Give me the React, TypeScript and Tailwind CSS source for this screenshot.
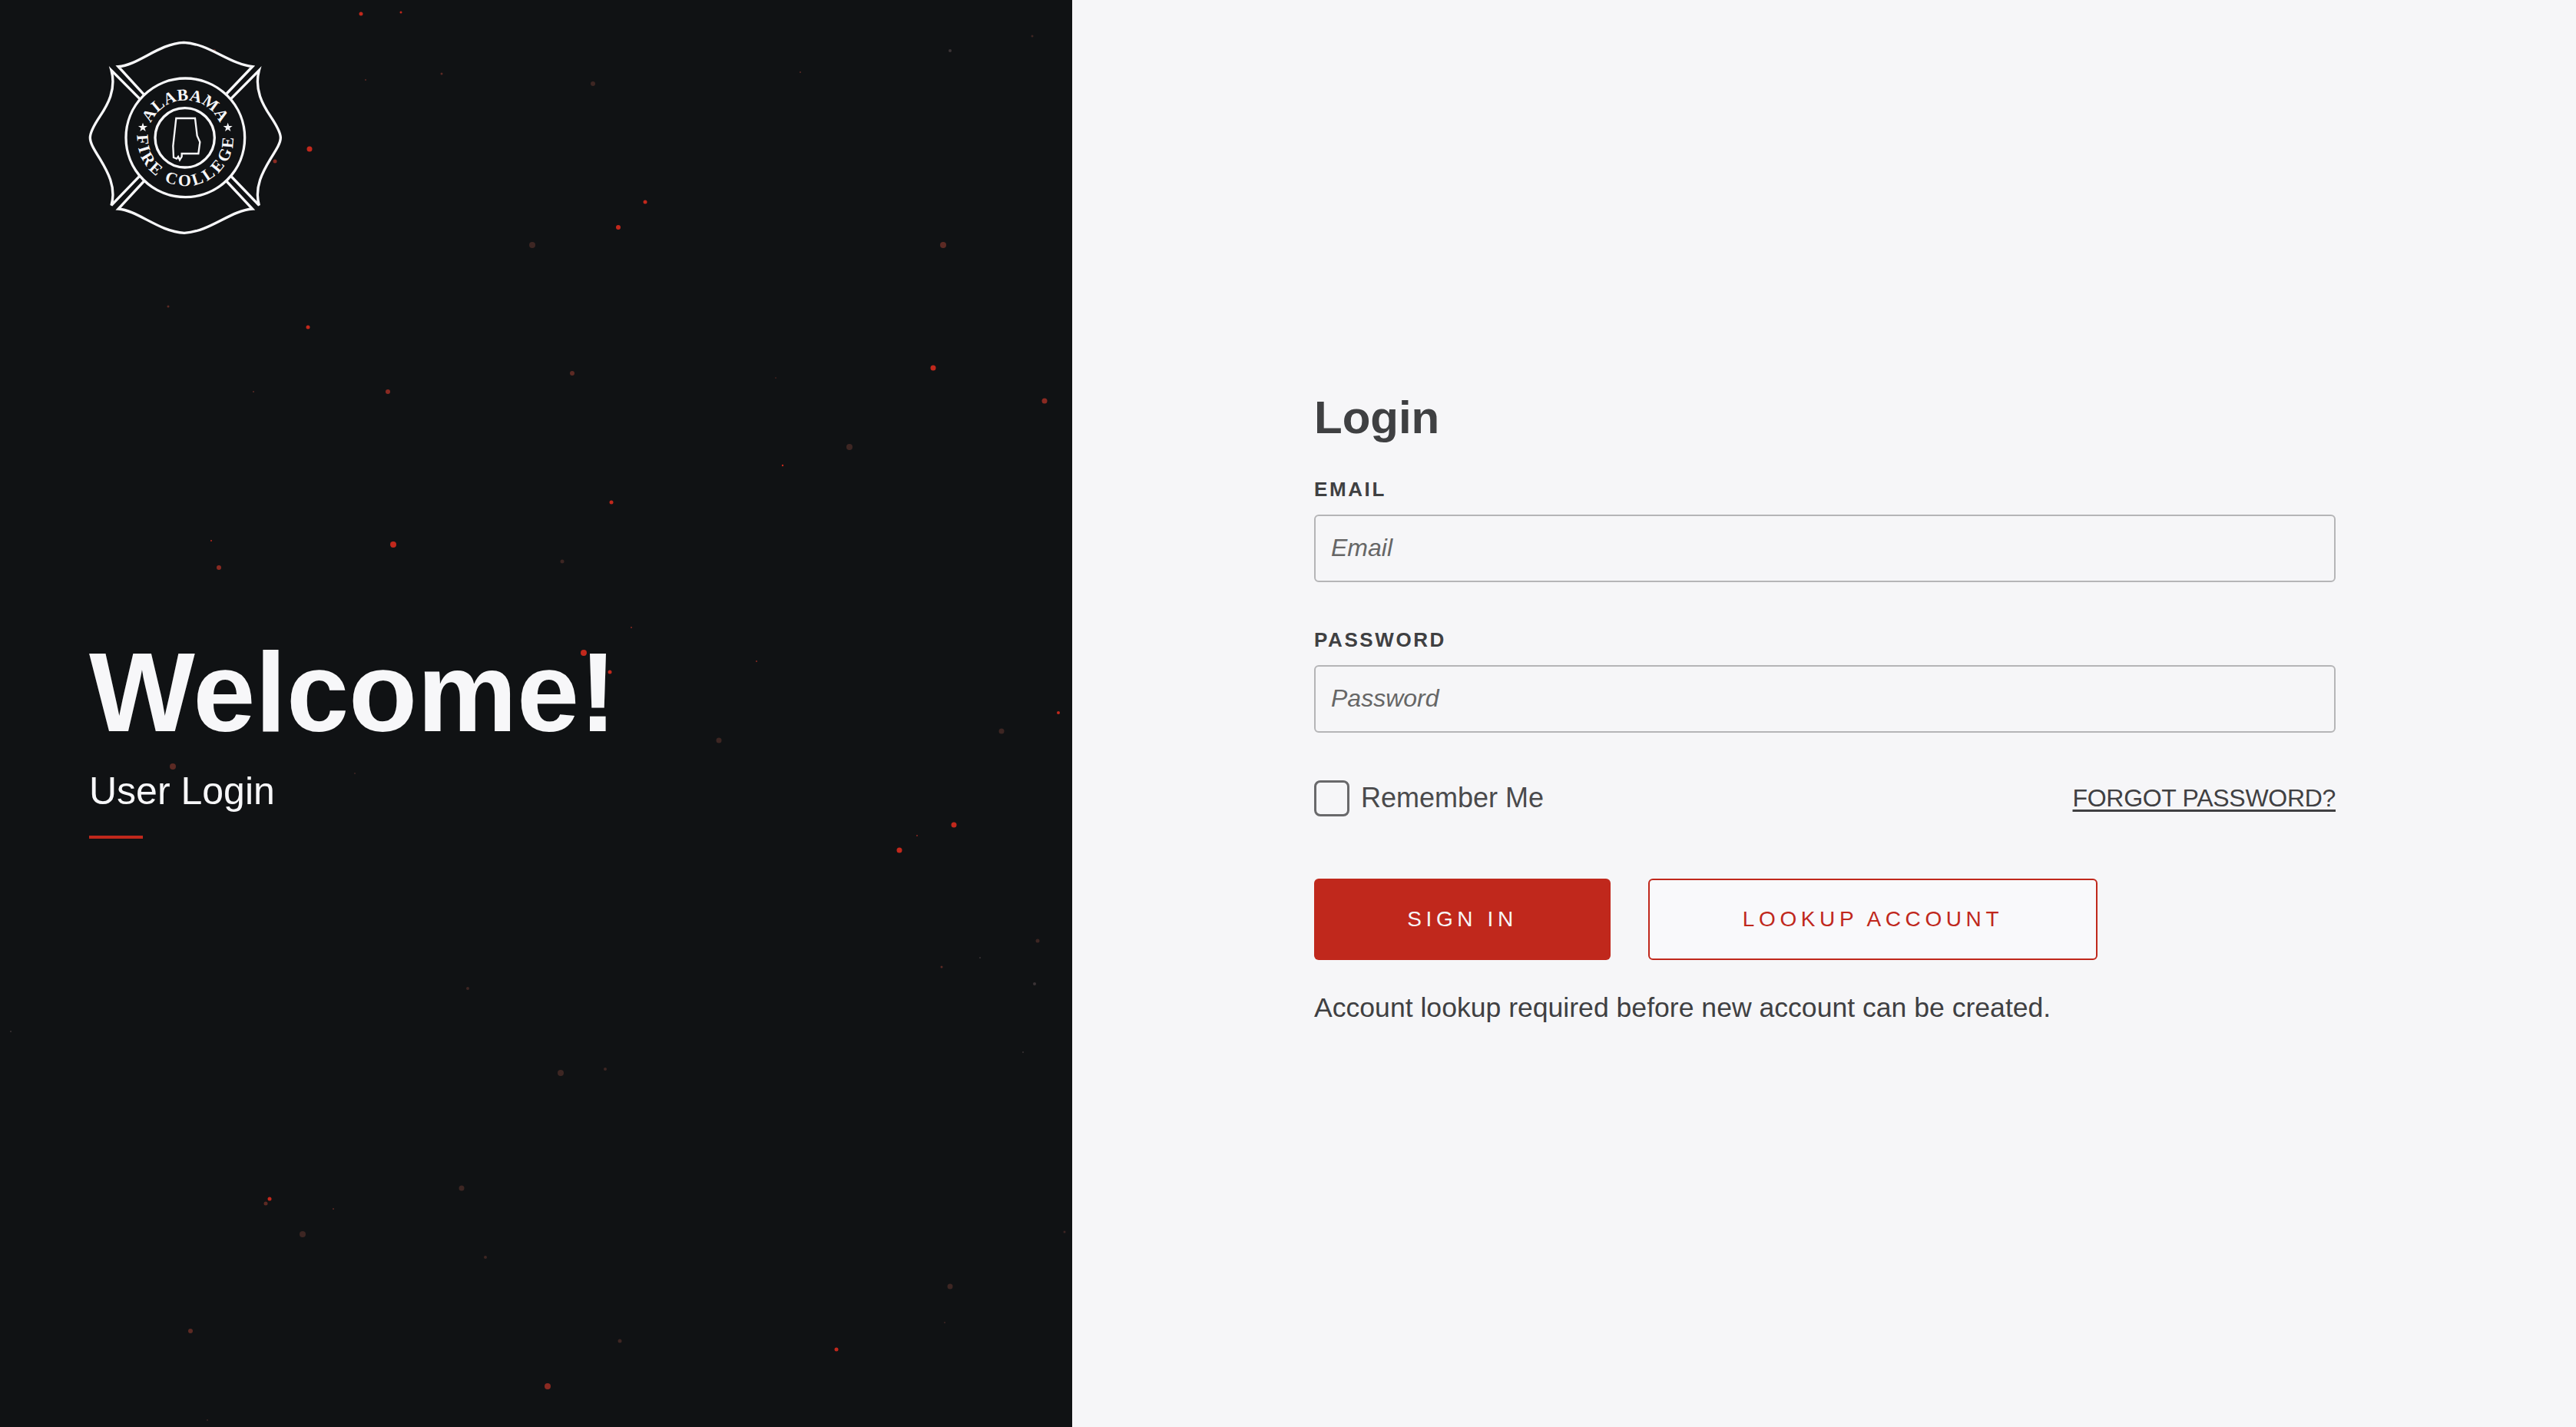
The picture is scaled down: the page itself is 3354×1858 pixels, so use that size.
const bright = "#c1281c";
const mid = "#8a2a22";
const dim = "#5c2a24";
const brown = "#3d2623";
const grey = "#3a3335";

// Ember particles of the left panel: [x, y, radius, colour]
const embers: [number, number, number, string][] = [
  [470, 18, 2.5, bright], [522, 16, 1.5, bright], [279, 66, 2, dim], [575, 96, 1.5, dim],
  [476, 104, 1, dim], [403, 194, 3.5, bright], [358, 210, 2.5, mid], [693, 319, 4, brown],
  [219, 399, 1.5, dim], [401, 426, 2.5, bright], [330, 510, 1, dim], [505, 510, 3, mid],
  [1344, 47, 1.5, brown], [1237, 66, 2, grey], [772, 109, 3, brown], [1042, 94, 1, dim],
  [840, 263, 2.5, bright], [805, 296, 3, bright], [1228, 319, 4, dim], [1215, 479, 3.5, bright],
  [1360, 522, 3.5, mid], [745, 486, 3, dim], [1106, 582, 4, brown], [1019, 606, 1.2, bright],
  [1010, 492, 0.8, dim], [512, 709, 4, bright], [285, 739, 3, mid], [275, 704, 1, bright],
  [225, 998, 4, dim], [462, 1007, 1, brown], [796, 654, 2.5, bright], [732, 731, 2.5, brown],
  [822, 817, 1, mid], [760, 850, 4, bright], [794, 875, 2.5, bright], [985, 861, 1, mid],
  [936, 964, 3.5, brown], [1304, 952, 3.5, brown], [1378, 928, 2, bright], [1242, 1074, 3.5, bright],
  [1194, 1088, 1, mid], [1171, 1107, 3.5, bright], [1351, 1225, 2.5, brown], [609, 1287, 2, brown],
  [14, 1343, 1, grey], [601, 1547, 3.5, brown], [351, 1561, 2.5, bright], [346, 1567, 2.5, dim],
  [434, 1574, 1, dim], [394, 1607, 4, brown], [632, 1637, 2, brown], [248, 1733, 3, dim],
  [270, 1849, 1, brown], [1276, 1247, 1, grey], [1226, 1259, 1.5, dim], [1347, 1281, 2, grey],
  [1332, 1370, 1, grey], [730, 1397, 4, brown], [788, 1392, 2, brown], [1386, 1604, 1.5, brown],
  [1237, 1675, 3.5, brown], [1230, 1722, 1, brown], [807, 1746, 2.5, brown], [1089, 1757, 2.5, bright],
  [713, 1805, 4, mid],
];

const star = (cx: number, cy: number, r: number) =>
  Array.from({ length: 10 }, (_, i) => {
    const a = -Math.PI / 2 + (i * Math.PI) / 5;
    const d = i % 2 === 0 ? r : r * 0.4;
    return `${cx + d * Math.cos(a)},${cy + d * Math.sin(a)}`;
  }).join(" ");

const Logo = () => (
  <svg viewBox="75 69 759 759" className="block w-[253px] h-[253px] relative font-['Liberation_Serif',serif]">
    <g fill="none" stroke="#f7f7f9" strokeWidth="10">
      <path d="M293 280 L192 170 C270 165 350 80 448 76 C545 80 625 160 716 170 L615 276" />
      <path d="M278 298 L165 185 C185 260 150 320 120 365 C90 410 82 430 82 448 C82 468 95 490 120 530 C150 580 185 640 165 712 L275 598" />
      <path d="M632 296 L742 185 C722 260 757 320 787 365 C817 410 826 430 826 448 C826 468 812 490 787 530 C757 580 722 640 742 712 L634 600" />
      <path d="M295 615 L192 726 C270 732 350 815 450 820 C550 815 630 732 716 726 L612 615" />
      <circle cx="454" cy="448" r="232" />
      <circle cx="452" cy="448" r="116" />
      <path
        strokeWidth="7"
        d="M418 372 L492 372 L500 440 L511 465 L505 510 L440 510 L440 522 L432 535 L426 522 L420 530 L408 525 L406 480 Z"
      />
    </g>
    <polygon points={star(288, 408, 19)} fill="#f7f7f9" />
    <polygon points={star(620, 408, 19)} fill="#f7f7f9" />
    <defs>
      <path id="arc-top" d="M308 448 A146 146 0 0 1 600 448" />
      <path id="arc-bottom" d="M269 415 A188 188 0 1 0 639 415" />
    </defs>
    <text fill="#f7f7f9" fontSize="65" fontWeight="700" letterSpacing="1" textAnchor="middle">
      <textPath href="#arc-top" startOffset="50%">ALABAMA</textPath>
    </text>
    <text fill="#f7f7f9" fontSize="65" fontWeight="700" letterSpacing="10" textAnchor="middle">
      <textPath href="#arc-bottom" startOffset="50%">FIRE COLLEGE</textPath>
    </text>
  </svg>
);

const Field = ({ label, type, className }: { label: string; type: string; className: string }) => (
  <label className={`block ${className}`}>
    <span className="block text-[26px] leading-none font-bold tracking-[2.6px] text-[#3f4042]">{label}</span>
    <input
      type={type}
      placeholder={label === "EMAIL" ? "Email" : "Password"}
      className="block w-full h-[88px] mt-5 px-5 border-2 border-[#b5b5b7] rounded-md bg-transparent text-[32px] placeholder:italic placeholder:text-[#666666] placeholder:opacity-100 outline-none"
    />
  </label>
);

const App = () => {
  return (
    <div className="flex h-[1858px] w-[3354px] overflow-hidden font-['Liberation_Sans',Arial,sans-serif]">
      <section className="relative w-[1396px] shrink-0 bg-[#101214] pl-[115px] pt-[53px] text-[#f7f7f9]">
        <svg viewBox="0 0 1396 1858" className="absolute inset-0 w-full h-full">
          {embers.map(([x, y, r, c]) => (
            <circle key={`${x}-${y}`} cx={x} cy={y} r={r} fill={c} />
          ))}
        </svg>
        <Logo />
        <h1 className="relative mt-[523px] ml-px text-[146px] leading-none font-bold">Welcome!</h1>
        <p className="relative mt-[30px] ml-px text-[50px] leading-none">User Login</p>
        <div className="relative mt-[33px] ml-px w-[70px] h-[4px] bg-[#c0281c]" />
      </section>

      <main className="flex flex-1 items-center justify-center bg-[#f6f6f8] pb-[14px] pl-[2px] text-[#3f4042]">
        <form className="w-[1330px]">
          <h2 className="text-[60px] leading-none font-bold">Login</h2>
          <Field label="EMAIL" type="email" className="mt-[50px]" />
          <Field label="PASSWORD" type="password" className="mt-[62px]" />

          <div className="mt-[62px] flex items-center justify-between">
            <label className="flex items-center gap-[15px] text-[36px] leading-none text-[#4a4a4c]">
              <input
                type="checkbox"
                className="block w-[46px] h-[47px] appearance-none border-[3px] border-[#69696b] rounded-lg bg-transparent"
              />
              Remember Me
            </label>
            <a href="#" className="text-[32px] leading-none tracking-[-0.3px] underline underline-offset-4 text-[#404042]">
              FORGOT PASSWORD?
            </a>
          </div>

          <div className="mt-[81px] flex gap-[49px]">
            <button
              type="button"
              className="h-[106px] w-[386px] rounded-md bg-[#c0281c] text-[28px] tracking-[5.6px] text-[#f7f7f9]"
            >
              SIGN IN
            </button>
            <button
              type="button"
              className="h-[106px] w-[585px] rounded-md border-2 border-[#c0281c] bg-[#f9f9fb] text-[28px] tracking-[5.6px] text-[#c0281c]"
            >
              LOOKUP ACCOUNT
            </button>
          </div>

          <p className="mt-[45px] text-[35.6px] leading-none">Account lookup required before new account can be created.</p>
        </form>
      </main>
    </div>
  );
};

export default App;
